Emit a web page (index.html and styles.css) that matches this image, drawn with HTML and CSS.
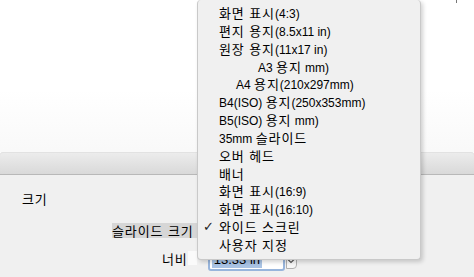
FILE: index.html
```html
<!DOCTYPE html>
<html lang="ko">
<head>
    <meta charset="UTF-8">
    <meta name="viewport" content="width=device-width, initial-scale=1.0">
    <title>슬라이드 크기</title>
    <link rel="stylesheet" href="styles.css">
</head>
<body>
    <div class="backdrop">
        <span class="tick"></span>
    </div>
    <div class="dialog">
        <div class="titlebar"></div>
        <div class="dialog-body">
            <div class="section-title">크기</div>
            <div class="form-row row-size">
                <label class="selected-label">슬라이드 크기</label>
            </div>
            <div class="form-row row-width">
                <label for="WIDTH">너비</label>
                <span class="blank"></span>
                <div class="field">
                    <span class="field-text">13.33 in</span>
                </div>
                <span class="spin">
                    <svg width="8" height="6" viewBox="0 0 8 6"><path d="M1 1.5 L4 4.5 L7 1.5" fill="none" stroke="#555" stroke-width="1.1"/></svg>
                </span>
            </div>
        </div>
    </div>

    <ul class="menu">
        <li>화면 표시<span class="lat">(4:3)</span></li>
        <li>편지 용지<span class="lat">(8.5x11 in)</span></li>
        <li>원장 용지<span class="lat">(11x17 in)</span></li>
        <li class="indent-a3"><span class="lat">A3 </span>용지<span class="lat"> mm)</span></li>
        <li class="indent-a4"><span class="lat">A4 </span>용지<span class="lat">(210x297mm)</span></li>
        <li><span class="lat">B4(ISO) </span>용지<span class="lat">(250x353mm)</span></li>
        <li><span class="lat">B5(ISO) </span>용지<span class="lat"> mm)</span></li>
        <li><span class="lat">35mm </span>슬라이드</li>
        <li>오버 헤드</li>
        <li>배너</li>
        <li>화면 표시<span class="lat">(16:9)</span></li>
        <li>화면 표시<span class="lat">(16:10)</span></li>
        <li class="checked">와이드 스크린</li>
        <li>사용자 지정</li>
    </ul>
</body>
</html>
```

FILE: styles.css
```css
body {
    font-family: "Noto Sans CJK KR", "Liberation Sans", sans-serif;
    font-size: 13px;
    letter-spacing: 0.9px;
    margin: 0;
    padding: 0;
    width: 474px;
    height: 277px;
    overflow: hidden;
    position: relative;
    background-color: #ffffff;
    color: #000;
}

.backdrop {
    height: 152px;
    background: linear-gradient(to bottom, #ffffff 0, #ffffff 90px, #f9f9f9 150px);
    position: relative;
}

.tick {
    position: absolute;
    left: 456px;
    top: 0;
    width: 1px;
    height: 3px;
    background-color: #777;
}

.dialog {
    height: 125px;
    background-color: #f0f0f0;
    border-radius: 4px 4px 0 0;
    box-shadow: 0 0 1px #bbb;
}

.titlebar {
    height: 21px;
    border-radius: 4px 4px 0 0;
    background: linear-gradient(to bottom, #ececec, #d9d9d9);
    border-bottom: 1px solid #b8b8b8;
    border-top: 1px solid #e2e2e2;
}

.dialog-body {
    padding: 15px 0 0 0;
}

.section-title {
    padding-left: 22px;
    line-height: 18px;
    height: 18px;
}

.form-row {
    display: flex;
    align-items: center;
}

.row-size {
    margin-top: 14px;
    padding-left: 112px;
    height: 16px;
}

.selected-label {
    background-color: #d6d6d6;
    line-height: 15px;
    padding: 0 12px 0 0;
}

.row-width {
    margin-top: 9px;
    padding-left: 162px;
    height: 26px;
    align-items: flex-start;
}

.row-width label {
    line-height: 18px;
    margin-top: 3px;
}

.blank {
    width: 9px;
    height: 14px;
    margin: 4px 0 0 0;
    background-color: #fafafa;
}

.field {
    margin-left: 11px;
    width: 71px;
    height: 20px;
    border: 2px solid #98b5dc;
    border-radius: 3px;
    background-color: #fff;
    box-sizing: content-box;
    padding: 0 0 0 2px;
}

.field-text {
    font-family: "Liberation Sans", sans-serif;
    font-size: 13px;
    letter-spacing: 0;
    line-height: 16px;
    display: inline-block;
    margin-top: 1px;
    background-color: #a9c3e4;
    padding: 0 2px;
}

.spin {
    margin-left: 1px;
    margin-top: 6px;
    width: 9px;
    height: 14px;
    border: 1px solid #b0b0b0;
    border-radius: 0 4px 4px 0;
    background-color: #f7f7f7;
    display: flex;
    align-items: center;
    justify-content: center;
}

.menu {
    position: absolute;
    left: 197px;
    top: 0;
    width: 224px;
    height: 260px;
    box-sizing: border-box;
    margin: 0;
    padding: 4px 0 0 0;
    list-style: none;
    background-color: #f0f0f0;
    border: 1px solid #c9c9c9;
    border-top: none;
    border-radius: 4px;
    box-shadow: 2px 2px 4px rgba(0, 0, 0, 0.18);
}

.menu li {
    height: 17.85px;
    line-height: 17.85px;
    padding-left: 21px;
    position: relative;
    white-space: nowrap;
}

.lat {
    font-family: "Liberation Sans", sans-serif;
    font-size: 12px;
    letter-spacing: 0;
}

.menu li.indent-a3 {
    padding-left: 60px;
}

.menu li.indent-a4 {
    padding-left: 38px;
}

.menu li.checked::before {
    content: "✓";
    position: absolute;
    left: 5px;
    top: 0;
    font-family: "DejaVu Sans", sans-serif;
    font-size: 13px;
    color: #222;
}
```
